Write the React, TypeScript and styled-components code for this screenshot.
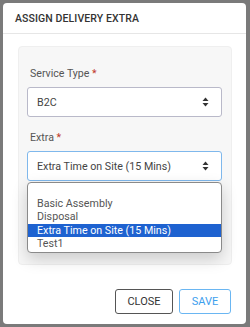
import styled, { createGlobalStyle } from 'styled-components';

const GlobalStyle = createGlobalStyle`
  html, body {
    margin: 0;
    padding: 0;
    background: #7a7a7a;
    font-family: Roboto, 'Liberation Sans', sans-serif;
  }
  * {
    box-sizing: border-box;
  }
`;

const Backdrop = styled.div`
  width: 250px;
  height: 327px;
  padding: 3px 4px 3px 3px;
`;

const Modal = styled.div`
  width: 243px;
  height: 321px;
  background: #fff;
  border-radius: 4px;
  display: flex;
  flex-direction: column;
`;

const ModalHeader = styled.div`
  height: 31px;
  padding: 0 12px;
  display: flex;
  align-items: center;
  border-bottom: 1px solid #e6e6e6;
  font-size: 10.5px;
  font-weight: 500;
  color: #333;
  text-transform: uppercase;
  letter-spacing: 0.1px;
`;

const ModalBody = styled.div`
  padding: 12px 14px 0 15px;
  flex-grow: 1;
`;

const Panel = styled.div`
  position: relative;
  background: #f7f7f7;
  border: 1px solid #efefef;
  border-radius: 4px;
  padding: 19px 9px 83px 8px;
`;

const Label = styled.div<{ spaced?: boolean }>`
  font-size: 10.6px;
  line-height: 16px;
  color: #555;
  padding-left: 3px;
  margin-top: ${(props) => (props.spaced ? '13px' : '0')};
  margin-bottom: 5px;

  span {
    color: #c0392b;
  }
`;

const SelectBox = styled.div<{ focused?: boolean }>`
  position: relative;
  height: 30px;
  background: #fff;
  border: 1px solid ${(props) => (props.focused ? '#7fb8ec' : '#b9b9c9')};
  border-radius: 3px;
  display: flex;
  align-items: center;
  padding: 0 12px 0 9px;
  font-size: 10.7px;
  color: #444;
`;

const SelectValue = styled.div`
  flex-grow: 1;
`;

const OptionList = styled.ul`
  position: absolute;
  left: -1px;
  right: -1px;
  top: 30px;
  margin: 0;
  padding: 0 0 1px;
  list-style: none;
  background: #fff;
  border: 1px solid #8a8a8a;
  border-radius: 4px;
  box-shadow: 0 6px 16px rgba(0, 0, 0, 0.18);
  z-index: 2;
`;

const Option = styled.li<{ selected?: boolean }>`
  height: 13.5px;
  line-height: 13.5px;
  padding-left: 9px;
  font-size: 10.7px;
  color: ${(props) => (props.selected ? '#fff' : '#555')};
  background: ${(props) => (props.selected ? '#1e62d0' : 'transparent')};
`;

const ModalFooter = styled.div`
  display: flex;
  justify-content: flex-end;
  gap: 6px;
  padding: 0 15px 10px 0;
`;

const Button = styled.button<{ primary?: boolean }>`
  height: 25px;
  padding: 0;
  width: ${(props) => (props.primary ? '52px' : '58px')};
  background: #fff;
  border: 1px solid ${(props) => (props.primary ? '#6ab6f2' : '#555')};
  border-radius: 3px;
  font-family: Roboto, 'Liberation Sans', sans-serif;
  font-size: 11px;
  color: ${(props) => (props.primary ? '#3da0ee' : '#333')};
  text-transform: uppercase;
`;

const Arrows = () => (
  <svg width="7" height="10" viewBox="0 0 7 10">
    <path d="M3.5 0.5 L6.5 4 H0.5 Z" fill="#333" />
    <path d="M3.5 9.5 L6.5 6 H0.5 Z" fill="#333" />
  </svg>
);

const extras = ['', 'Basic Assembly', 'Disposal', 'Extra Time on Site (15 Mins)', 'Test1'];

export default function App() {
  return (
    <>
      <GlobalStyle />
      <Backdrop>
        <Modal>
          <ModalHeader>Assign Delivery Extra</ModalHeader>
          <ModalBody>
            <Panel>
              <Label>
                Service Type <span>*</span>
              </Label>
              <SelectBox>
                <SelectValue>B2C</SelectValue>
                <Arrows />
              </SelectBox>
              <Label spaced>
                Extra <span>*</span>
              </Label>
              <SelectBox focused>
                <SelectValue>Extra Time on Site (15 Mins)</SelectValue>
                <Arrows />
                <OptionList>
                  {extras.map((item) => (
                    <Option key={item || 'empty'} selected={item === 'Extra Time on Site (15 Mins)'}>
                      {item}
                    </Option>
                  ))}
                </OptionList>
              </SelectBox>
            </Panel>
          </ModalBody>
          <ModalFooter>
            <Button>Close</Button>
            <Button primary>Save</Button>
          </ModalFooter>
        </Modal>
      </Backdrop>
    </>
  );
}
